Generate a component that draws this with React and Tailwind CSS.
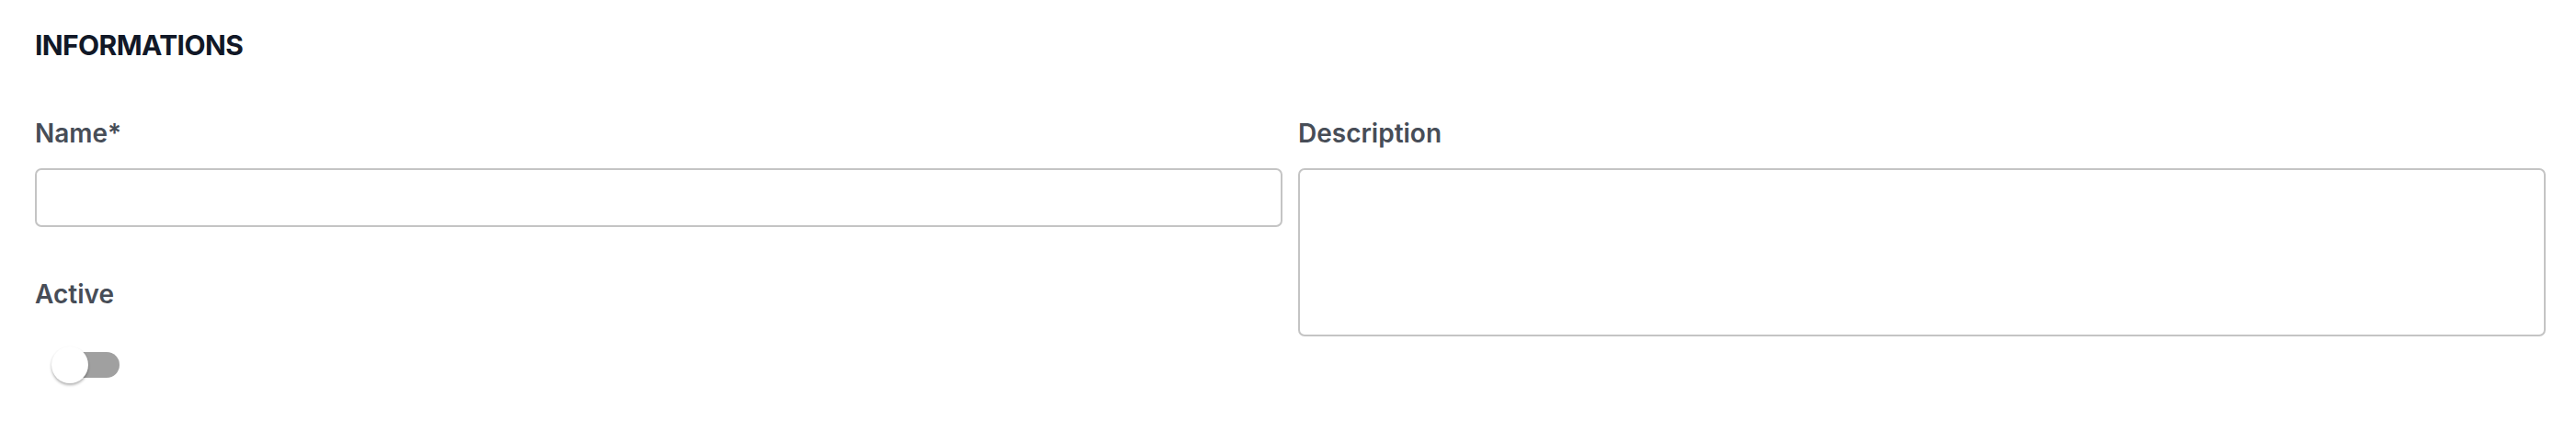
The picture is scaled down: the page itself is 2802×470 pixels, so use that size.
import { useState } from "react";

const font = { fontFamily: "Inter, 'Noto Sans', sans-serif" };

function Label({ children }) {
  return <label className="block text-[28px] leading-[36px] font-semibold text-[#474d57]">{children}</label>;
}

function Toggle({ on, setOn }) {
  return (
    <button
      type="button"
      onClick={() => setOn(!on)}
      className="relative ml-[18px] flex h-[40px] w-[74px] items-center"
      aria-pressed={on}
    >
      <span className={`ml-[3px] h-[28px] w-[72px] rounded-full ${on ? "bg-[#90caf9]" : "bg-[#a0a0a0]"}`} />
      <span
        className={`absolute top-0 h-[40px] w-[40px] rounded-full bg-white shadow-[0_2px_3px_rgba(0,0,0,0.3)] transition-all ${
          on ? "left-[35px] bg-[#1976d2]" : "left-0"
        }`}
      />
    </button>
  );
}

export default function App() {
  const [active, setActive] = useState(false);

  return (
    <div className="min-h-[470px] bg-white pt-[29px] pl-[38px] pr-[33px]" style={font}>
      <h2 className="text-[30px] leading-[40px] font-bold tracking-[-0.6px] text-[#111827]">INFORMATIONS</h2>
      <div className="mt-[58px] grid grid-cols-2 gap-x-[17px]">
        <div>
          <Label>Name*</Label>
          <input className="mt-[20px] block h-[64px] w-full rounded-[7px] border-2 border-[#c4c4c4] px-4 text-[28px] outline-none" />
          <div className="mt-[55px]">
            <Label>Active</Label>
          </div>
          <div className="mt-[39px]">
            <Toggle on={active} setOn={setActive} />
          </div>
        </div>
        <div>
          <Label>Description</Label>
          <textarea className="mt-[20px] block h-[183px] w-full resize-none rounded-[7px] border-2 border-[#c4c4c4] p-4 text-[28px] outline-none" />
        </div>
      </div>
    </div>
  );
}
